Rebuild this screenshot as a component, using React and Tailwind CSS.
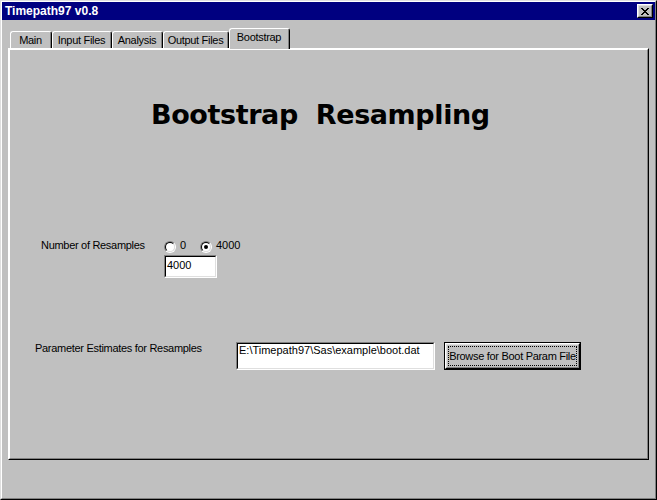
import React from 'react';

const raisedOuter = 'border border-t-white border-l-white border-r-black border-b-black';
const raisedInner = 'border border-t-[#dfdfdf] border-l-[#dfdfdf] border-r-[#808080] border-b-[#808080]';
const sunkenOuter = 'border border-t-[#808080] border-l-[#808080] border-r-white border-b-white';
const sunkenInner = 'border border-t-black border-l-black border-r-[#dfdfdf] border-b-[#dfdfdf]';

const Radio = ({ checked }) => (
  <span className={`block w-[12px] h-[12px] rounded-full ${sunkenOuter}`}>
    <span className={`flex w-full h-full rounded-full items-center justify-center bg-white ${sunkenInner}`}>
      {checked && <span className="block w-[4px] h-[4px] rounded-full bg-black" />}
    </span>
  </span>
);

const Tab = ({ label, width, active }) => {
  if (active) {
    return (
      <div
        className="relative z-10 -mb-px h-[21px] border-t border-l border-r border-t-white border-l-white border-r-black rounded-t-[3px] bg-[#c0c0c0]"
        style={{ width }}
      >
        <div className="h-full border-r border-r-[#808080] pt-[2px] text-center leading-[13px]">{label}</div>
      </div>
    );
  }
  return (
    <div
      className="h-[17px] border-t border-l border-r border-t-white border-l-white border-r-black rounded-t-[3px]"
      style={{ width }}
    >
      <div className="h-full border-r border-r-[#808080] pt-[2px] text-center leading-[13px]">{label}</div>
    </div>
  );
};

const tabs = [
  { label: 'Main', width: 42 },
  { label: 'Input Files', width: 60 },
  { label: 'Analysis', width: 51 },
  { label: 'Output Files', width: 66 },
  { label: 'Bootstrap', width: 61, active: true },
];

export default function App() {
  return (
    <div className="w-[657px] h-[500px] bg-[#c0c0c0] text-black text-[11px] tracking-[-0.3px] font-['Liberation_Sans',Arial,sans-serif] overflow-hidden">
      <div className="h-full border border-t-[#dfdfdf] border-l-[#dfdfdf] border-r-black border-b-black">
        <div className="h-full border border-t-white border-l-white border-r-[#808080] border-b-[#808080]">
          {/* title bar */}
          <div className="h-[18px] bg-[#000080] flex items-center justify-between pl-[3px] pr-[2px]">
            <span className="text-white font-bold text-[12px] tracking-normal leading-[14px]">Timepath97 v0.8</span>
            <div className={`w-[16px] h-[14px] bg-[#c0c0c0] ${raisedOuter}`}>
              <div className={`w-full h-full flex items-center justify-center ${raisedInner}`}>
                <svg width="8" height="7" viewBox="0 0 8 7">
                  <path d="M0 0h2v1h1v1h2V1h1V0h2v1H7v1H6v1H5v1h1v1h1v1h1v1H6V6H5V5H3v1H2v1H0V6h1V5h1V4h1V3H2V2H1V1H0z" fill="black" />
                </svg>
              </div>
            </div>
          </div>

          <div className="px-[6px]">
            {/* tabs */}
            <div className="mt-[8px] h-[20px] flex items-end pl-[2px]">
              {tabs.map((t) => (
                <Tab key={t.label} {...t} />
              ))}
            </div>

            {/* panel */}
            <div className={`h-[412px] ${raisedOuter}`}>
              <div className={`h-full ${raisedInner} border-t-white border-l-white`}>
                <div className="pl-[141px] mt-[49px] h-[32px] leading-[32px] whitespace-pre font-bold text-[27px] tracking-[-0.4px] font-['DejaVu_Sans',Verdana,sans-serif]">
                  {'Bootstrap  Resampling'}
                </div>

                <div className="mt-[108px] flex items-start pl-[31px] h-[14px]">
                  <span className="w-[123px] leading-[13px]">Number of Resamples</span>
                  <span className="mt-[2px]">
                    <Radio />
                  </span>
                  <span className="ml-[4px] w-[20px] leading-[13px]">0</span>
                  <span className="mt-[2px]">
                    <Radio checked />
                  </span>
                  <span className="ml-[4px] tracking-normal leading-[13px]">4000</span>
                </div>

                <div className={`ml-[154px] mt-[2px] w-[53px] h-[23px] ${sunkenOuter}`}>
                  <div className={`w-full h-full bg-white pl-[1px] pt-[2px] leading-[13px] tracking-normal ${sunkenInner}`}>4000</div>
                </div>

                <div className="mt-[64px] flex items-start pl-[25px]">
                  <span className="w-[201px] leading-[13px]">Parameter Estimates for Resamples</span>
                  <div className={`w-[199px] h-[28px] ${sunkenOuter}`}>
                    <div className={`w-full h-full bg-white pl-[1px] leading-[12px] tracking-normal ${sunkenInner}`}>
                      E:\Timepath97\Sas\example\boot.dat
                    </div>
                  </div>
                  <div className="ml-[9px] w-[137px] h-[28px] border border-black">
                    <div className={`w-full h-full ${raisedOuter}`}>
                      <div className={`w-full h-full p-[1px] ${raisedInner}`}>
                        <div className="w-full h-full border border-dotted border-black flex items-center justify-center leading-[13px]">
                          Browse for Boot Param File
                        </div>
                      </div>
                    </div>
                  </div>
                </div>
              </div>
            </div>
          </div>
        </div>
      </div>
    </div>
  );
}
